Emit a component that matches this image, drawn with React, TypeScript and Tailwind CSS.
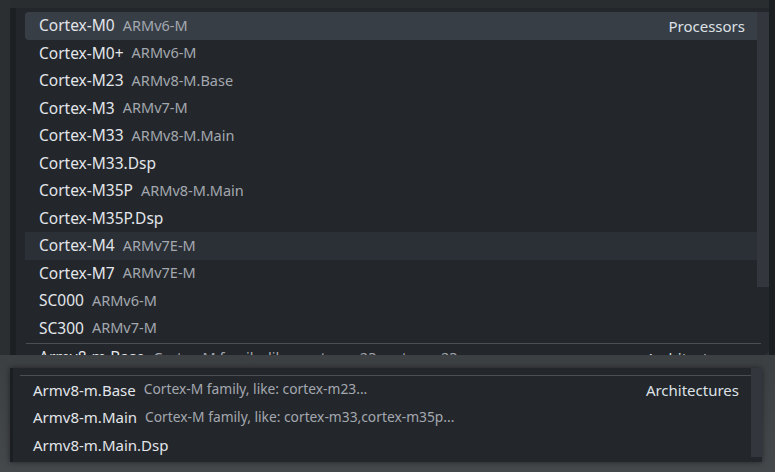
import React from 'react';

type Item = { name: string; desc?: string; label?: string; state?: 'active' | 'hover' };

const processors: Item[] = [
  { name: 'Cortex-M0', desc: 'ARMv6-M', label: 'Processors', state: 'active' },
  { name: 'Cortex-M0+', desc: 'ARMv6-M' },
  { name: 'Cortex-M23', desc: 'ARMv8-M.Base' },
  { name: 'Cortex-M3', desc: 'ARMv7-M' },
  { name: 'Cortex-M33', desc: 'ARMv8-M.Main' },
  { name: 'Cortex-M33.Dsp' },
  { name: 'Cortex-M35P', desc: 'ARMv8-M.Main' },
  { name: 'Cortex-M35P.Dsp' },
  { name: 'Cortex-M4', desc: 'ARMv7E-M', state: 'hover' },
  { name: 'Cortex-M7', desc: 'ARMv7E-M' },
  { name: 'SC000', desc: 'ARMv6-M' },
  { name: 'SC300', desc: 'ARMv7-M' },
];

const architectures: Item[] = [
  { name: 'Armv8-m.Base', desc: 'Cortex-M family, like: cortex-m23...', label: 'Architectures' },
  { name: 'Armv8-m.Main', desc: 'Cortex-M family, like: cortex-m33,cortex-m35p...' },
  { name: 'Armv8-m.Main.Dsp' },
];

function Row({ item, width, pad, small }: { item: Item; width: string; pad: string; small?: boolean }) {
  const bg =
    item.state === 'active' ? 'bg-[#383e46] rounded-[4px]' : item.state === 'hover' ? 'bg-[#2b2f36]' : '';
  return (
    <div className={`flex items-center h-[27.5px] shrink-0 ${width} ${pad} ${bg}`}>
      <span className={`${small ? 'text-[15px]' : 'text-[15.5px]'} text-[#e2e5ea] whitespace-nowrap`}>{item.name}</span>
      {item.desc && (
        <span className={`ml-[8px] ${small ? 'text-[13.8px]' : 'text-[14.5px]'} text-[#a3a8b0] whitespace-nowrap`}>
          {item.desc}
        </span>
      )}
      {item.label && <span className="ml-auto pr-[18px] text-[15px] text-[#dde1e6]">{item.label}</span>}
    </div>
  );
}

export default function App() {
  return (
    <div
      className="w-[775px] h-[472px] overflow-hidden bg-[#3a3d40] flex flex-col"
      style={{ fontFamily: '"Noto Sans", "Open Sans", sans-serif' }}
    >
      {/* top capture: processors list */}
      <div className="flex h-[355px] shrink-0 bg-[#2c2f32]">
        <div className="w-[10px] shrink-0 bg-[#2c2f32]" />
        <div className="flex flex-col w-[759px] shrink-0">
          <div className="h-[8px] bg-[#2a2d30]" />
          <div className="relative flex-1 bg-[#23272b] border-l-[6px] border-[#1d2023] overflow-hidden rounded-br-[6px]">
            <div className="flex flex-col pl-[9px] pt-[4px]">
              {processors.map((p) => (
                <Row key={p.name} item={p} width="w-[738px]" pad="pl-[14px]" />
              ))}
              <div className="ml-[1px] w-[735px] h-px bg-[#4a4f56] mt-[1px]" />
              <div className="flex items-center w-[738px] pl-[14px] pt-[8px] h-[20px]">
                <span className="text-[15.5px] text-[#e2e5ea] whitespace-nowrap">Armv8-m.Base</span>
                <span className="ml-[8px] text-[14.5px] text-[#a3a8b0] whitespace-nowrap">Cortex-M family, like: cortex-m23,cortex-m23...</span>
                <span className="ml-auto pr-[24px] text-[15px] text-[#dde1e6]">Architectures</span>
              </div>
            </div>
            <div className="absolute right-0 top-[4px] w-[12px] h-[275px] bg-[#33373d]" />
          </div>
        </div>
        <div className="w-[6px] shrink-0 bg-[#1c1f22]" />
      </div>

      {/* bottom capture: architectures list */}
      <div className="flex flex-1 pt-[13px] pb-[10px] pl-[10px] bg-gradient-to-b from-[#3d4043] to-[#46494c]">
        <div className="relative w-[752px] h-[94px] bg-[#23272b] border-l-[3px] border-[#1c1f22] shadow-[0_0_6px_rgba(0,0,0,0.5)] overflow-hidden">
          <div className="ml-[7px] mt-[7px] w-[735px] h-px bg-[#4a4f56]" />
          <div className="flex flex-col pl-[20px]">
            {architectures.map((a) => (
              <Row key={a.name} item={a} width="w-[724px]" pad="pl-0" small />
            ))}
          </div>
          <div className="absolute right-0 top-0 w-[11px] h-[89px] bg-[#33373d]" />
        </div>
      </div>
    </div>
  );
}
